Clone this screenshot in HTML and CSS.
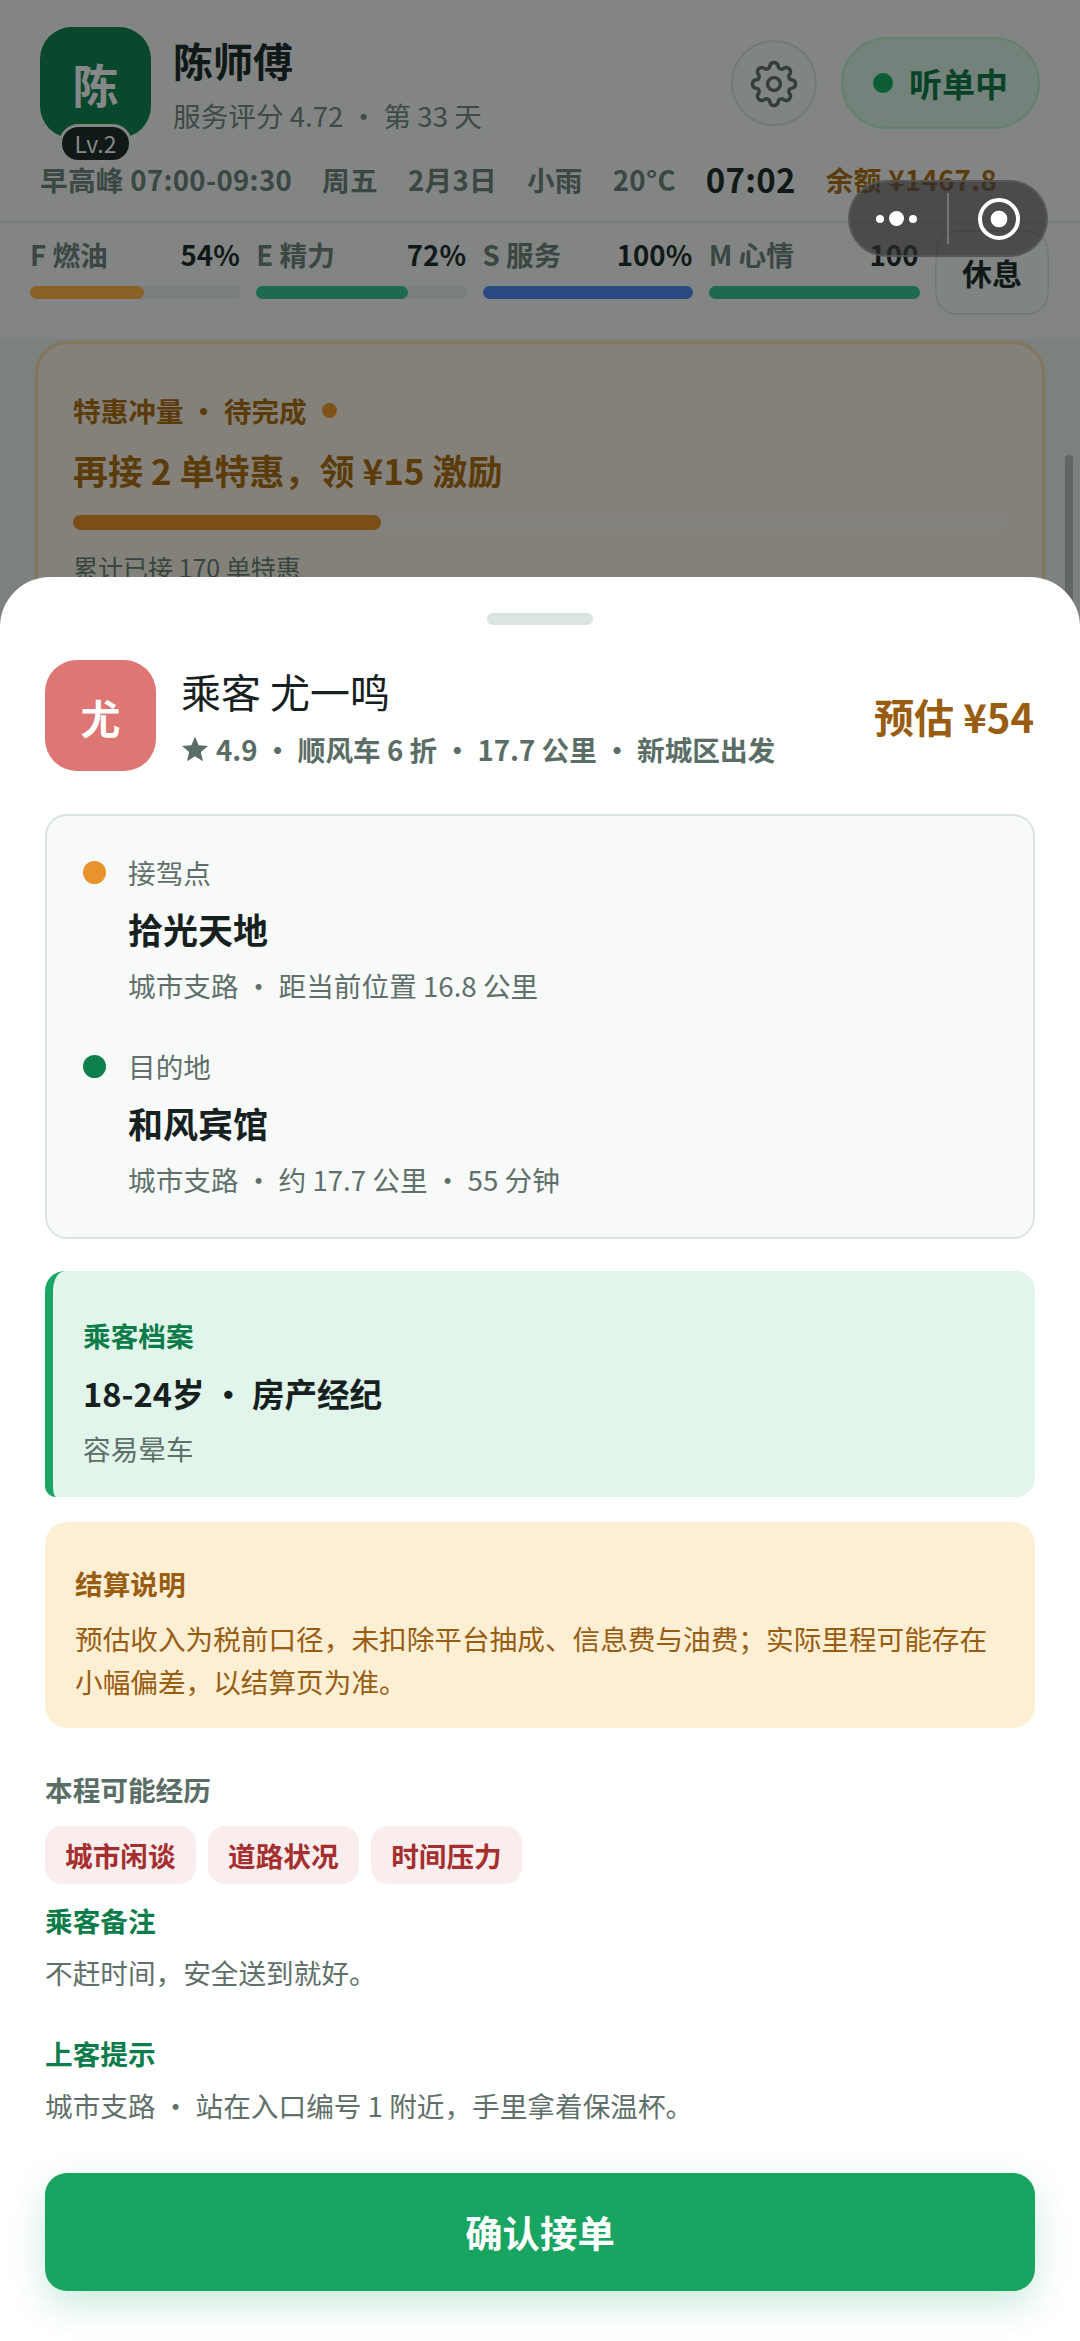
FILE: index.html
```html
<!DOCTYPE html>
<html lang="zh-CN">
<head>
<meta charset="utf-8">
<title>接单</title>
<link rel="stylesheet" href="styles.css">
</head>
<body>
<div class="home">
  <header class="header">
    <div class="driver">
      <div class="driver-avatar">陈<span class="level">Lv.2</span></div>
      <div class="driver-info">
        <div class="driver-name">陈师傅</div>
        <div class="driver-sub">服务评分 4.72 · 第 33 天</div>
      </div>
      <div class="settings">
        <svg width="52" height="52" viewBox="-26.4 -26.4 52.8 52.8" fill="none" stroke="currentColor" stroke-width="3.5" stroke-linejoin="round">
          <path d="M-4.2-18.8A4.4 4.4 0 0 1 4.2-18.8A3.5 3.5 0 0 0 10.32-16.26A4.4 4.4 0 0 1 16.26-10.32A3.5 3.5 0 0 0 18.8-4.2A4.4 4.4 0 0 1 18.8 4.2A3.5 3.5 0 0 0 16.26 10.32A4.4 4.4 0 0 1 10.32 16.26A3.5 3.5 0 0 0 4.2 18.8A4.4 4.4 0 0 1-4.2 18.8A3.5 3.5 0 0 0-10.32 16.26A4.4 4.4 0 0 1-16.26 10.32A3.5 3.5 0 0 0-18.8 4.2A4.4 4.4 0 0 1-18.8-4.2A3.5 3.5 0 0 0-16.26-10.32A4.4 4.4 0 0 1-10.32-16.26A3.5 3.5 0 0 0-4.2-18.8Z"/>
          <circle r="6.5"/>
        </svg>
      </div>
      <div class="status"><i class="status-dot"></i>听单中</div>
    </div>
    <div class="facts">
      <span>早高峰 07:00-09:30</span><span>周五</span><span>2月3日</span><span>小雨</span><span>20°C</span><span class="clock">07:02</span><span class="balance">余额 ¥1467.8</span>
    </div>
  </header>
  <section class="stats">
    <div class="stat"><div class="stat-head"><span>F 燃油</span><b>54%</b></div><div class="bar"><i class="fill amber" style="width:54%"></i></div></div>
    <div class="stat"><div class="stat-head"><span>E 精力</span><b>72%</b></div><div class="bar"><i class="fill teal" style="width:72%"></i></div></div>
    <div class="stat"><div class="stat-head"><span>S 服务</span><b>100%</b></div><div class="bar"><i class="fill blue" style="width:100%"></i></div></div>
    <div class="stat"><div class="stat-head"><span>M 心情</span><b>100</b></div><div class="bar"><i class="fill teal" style="width:100%"></i></div></div>
    <div class="rest">休息</div>
  </section>
  <section class="promo">
    <div class="promo-tag">特惠冲量 · 待完成<i class="promo-dot"></i></div>
    <div class="promo-title">再接 2 单特惠，领 ¥15 激励</div>
    <div class="promo-bar"><i style="width:33%"></i></div>
    <div class="promo-note">累计已接 170 单特惠</div>
  </section>
  <div class="scrollbar"></div>
</div>

<div class="capsule">
  <div class="capsule-more"><i></i><i class="big"></i><i></i></div>
  <div class="capsule-line"></div>
  <div class="capsule-close"><i class="ring"></i></div>
</div>

<main class="sheet">
  <div class="handle"></div>
  <div class="passenger">
    <div class="passenger-avatar">尤</div>
    <div class="passenger-info">
      <div class="passenger-name">乘客 尤一鸣</div>
      <div class="passenger-meta"><svg class="star" viewBox="0 0 26 26"><path fill="currentColor" d="M13 0.5L16.6 9.2L26 9.9L18.8 16L21 25.2L13 20.2L5 25.2L7.2 16L0 9.9L9.4 9.2Z"/></svg><span>4.9 · 顺风车 6 折 · 17.7 公里 · 新城区出发</span></div>
    </div>
    <div class="price">预估 ¥54</div>
  </div>
  <div class="route">
    <div class="stop">
      <i class="stop-dot start"></i>
      <div class="stop-label">接驾点</div>
      <div class="stop-name">拾光天地</div>
      <div class="stop-note">城市支路 · 距当前位置 16.8 公里</div>
    </div>
    <div class="stop">
      <i class="stop-dot end"></i>
      <div class="stop-label">目的地</div>
      <div class="stop-name">和风宾馆</div>
      <div class="stop-note">城市支路 · 约 17.7 公里 · 55 分钟</div>
    </div>
  </div>
  <div class="profile">
    <div class="green-label">乘客档案</div>
    <div class="profile-title">18-24岁 · 房产经纪</div>
    <div class="text">容易晕车</div>
  </div>
  <div class="settle">
    <div class="settle-title">结算说明</div>
    <div class="settle-text">预估收入为税前口径，未扣除平台抽成、信息费与油费；实际里程可能存在小幅偏差，以结算页为准。</div>
  </div>
  <div class="events-label">本程可能经历</div>
  <div class="chips"><span class="chip">城市闲谈</span><span class="chip">道路状况</span><span class="chip">时间压力</span></div>
  <div class="note">
    <div class="green-label">乘客备注</div>
    <div class="text">不赶时间，安全送到就好。</div>
  </div>
  <div class="note">
    <div class="green-label">上客提示</div>
    <div class="text">城市支路 · 站在入口编号 1 附近，手里拿着保温杯。</div>
  </div>
  <div class="confirm">确认接单</div>
</main>
</body>
</html>
```
FILE: styles.css
```css
* { box-sizing: border-box; }
body {
  margin: 0;
  width: 1080px;
  height: 2341px;
  position: relative;
  overflow: hidden;
  background: #7c8180;
  font-family: "Noto Sans CJK SC", sans-serif;
  font-size: 27.65px;
  line-height: 40px;
  color: #16211f;
}
i { font-style: normal; display: block; }

/* dimmed home screen */
.home { height: 634px; overflow: hidden; position: relative; background: #7c8180; color: #101918; }
.header { height: 223px; padding: 27px 40px 0; background: #838584; border-bottom: 2px solid #767a78; }
.driver { display: flex; height: 111px; }
.driver-avatar {
  position: relative;
  width: 111px; height: 111px;
  border-radius: 32px;
  background: #09482d;
  color: #868887;
  font-size: 46px; font-weight: 700; line-height: 113px;
  text-align: center;
}
.level {
  position: absolute;
  left: 19px; top: 97px;
  width: 73px; height: 39px;
  border: 3px solid #838584;
  border-radius: 20px;
  background: #101918;
  color: #868887;
  font-size: 23px; font-weight: 400; line-height: 32px;
}
.driver-info { flex: 1; padding: 5px 0 0 22px; }
.driver-name { font-size: 40px; font-weight: 700; line-height: 56px; }
.driver-sub { margin-top: 7px; color: #3e4a46; }
.settings {
  display: flex; align-items: center; justify-content: center;
  width: 86px; height: 86px;
  margin: 13px 24px 0 0;
  padding-top: 2px;
  border: 2px solid #747978;
  border-radius: 50%;
  background: #808483;
  color: #333e3a;
}
.status {
  display: flex; align-items: center; justify-content: center; gap: 16px;
  width: 199px; height: 92px;
  margin-top: 10px;
  border: 2px solid #64806f;
  border-radius: 46px;
  background: #73827a;
  color: #0a4229;
  font-size: 33px; font-weight: 700;
}
.status-dot { width: 20px; height: 20px; border-radius: 50%; background: #0c5c36; }
.facts { display: flex; gap: 30px; margin-top: 21px; color: #3a4743; font-weight: 700; letter-spacing: .28px; white-space: nowrap; }
.clock { font-size: 33px; color: #101918; }
.balance { color: #5c3c0c; }

.stats {
  display: grid;
  grid-template-columns: repeat(4, 1fr) 114px;
  column-gap: 15.5px;
  height: 116px;
  padding: 7px 31px 0 30px;
  background: #838584;
}
.stat { padding-top: 4px; }
.stat-head { display: flex; justify-content: space-between; padding-right: 1px; color: #3a4743; font-weight: 700; }
.stat-head b { color: #101918; font-weight: 700; }
.bar { height: 13px; margin-top: 12px; border-radius: 7px; background: #7a7f7d; }
.fill { height: 100%; border-radius: 7px; }
.amber { background: #896125; }
.teal { background: #1d6a52; }
.blue { background: #294a80; }
.rest {
  height: 85px;
  border: 2px solid #747978;
  border-radius: 22px;
  background: #808483;
  text-align: center;
  font-size: 30px; font-weight: 700; line-height: 81px;
}

.promo {
  height: 400px;
  margin: 2px 35px 0;
  padding: 46px 35px 0;
  border: 3px solid #84765c;
  border-radius: 32px;
  background: #83817a;
  color: #5c3b0b;
}
.promo-tag { display: flex; align-items: center; gap: 15px; font-weight: 700; }
.promo-dot { width: 15px; height: 15px; border-radius: 50%; background: #7f5219; }
.promo-title { margin-top: 15px; font-size: 35px; font-weight: 700; line-height: 50px; }
.promo-bar { height: 15px; margin-top: 20px; border-radius: 8px; background: #83827f; }
.promo-bar i { height: 100%; border-radius: 8px; background: #7b4e18; }
.promo-note { margin-top: 17px; font-size: 25px; color: #36463f; }
.scrollbar { position: absolute; left: 1065px; top: 455px; width: 8px; height: 200px; border-radius: 4px; background: #616564; }

/* mini-program capsule */
.capsule {
  position: absolute;
  left: 848px; top: 180px;
  width: 200px; height: 77px;
  display: flex; align-items: center;
  border: 2px solid rgba(90, 92, 91, .8);
  border-radius: 39px;
  background: rgba(45, 45, 45, .65);
}
.capsule-more { display: flex; align-items: center; justify-content: center; gap: 5px; width: 97px; padding-right: 4px; }
.capsule-more i { width: 8px; height: 8px; border-radius: 50%; background: #fff; }
.capsule-more .big { width: 15px; height: 15px; }
.capsule-line { width: 2px; height: 51px; background: #747676; }
.capsule-close { display: flex; flex: 1; justify-content: center; padding-left: 2px; }
.ring { width: 42px; height: 42px; border: 4px solid #fff; border-radius: 50%; background: radial-gradient(circle, #fff 8px, transparent 8.7px); }

/* order sheet */
.sheet {
  position: relative;
  height: 1764px;
  margin-top: -57px;
  padding: 36px 45px 0;
  border-radius: 50px 50px 0 0;
  background: #fff;
}
.handle { width: 106px; height: 12px; margin: 0 auto; border-radius: 6px; background: #dbe4e0; }
.passenger { display: flex; height: 111px; margin-top: 35px; }
.passenger-avatar {
  width: 111px; height: 111px;
  border-radius: 32px;
  background: #de7673;
  color: #fff;
  text-align: center;
  font-size: 40px; font-weight: 700; line-height: 115px;
}
.passenger-info { flex: 1; padding: 3px 0 0 25px; }
.passenger-name { font-size: 40px; line-height: 56px; }
.passenger-meta { display: flex; align-items: center; gap: 8px; margin-top: 10px; color: #5a6e66; font-weight: 700; white-space: nowrap; }
.star { width: 26px; height: 26px; margin-left: 1px; }
.price { margin-right: 1px; color: #995d12; font-size: 40px; font-weight: 700; line-height: 113px; }

.route {
  height: 425px;
  margin-top: 43px;
  padding: 36px 36px 0 81px;
  border: 2px solid #dbe4e1;
  border-radius: 22px;
  background: #f7faf9;
}
.stop { position: relative; height: 193.5px; }
.stop-dot { position: absolute; left: -45px; top: 9px; width: 23px; height: 23px; border-radius: 50%; }
.start { background: #e8932c; }
.end { background: #0c7f4b; }
.stop-label, .stop-note, .text { color: #5f706a; }
.stop-name { margin-top: 12px; font-size: 35px; font-weight: 700; line-height: 50px; }
.stop-note { margin-top: 11px; }

.profile {
  height: 226px;
  margin-top: 32px;
  padding: 44px 30px 0 30px;
  border-left: 8px solid #1aa564;
  border-radius: 20px 20px 20px 11px;
  background: #e1f5ea;
}
.green-label { color: #0c7d4a; font-weight: 700; }
.profile-title { margin: 13px 0 10px; font-size: 32.6px; font-weight: 700; line-height: 50px; }

.settle {
  height: 206px;
  margin-top: 25px;
  padding: 41px 31px 0 30px;
  border-radius: 22px;
  background: #fdefd4;
  color: #995d12;
}
.settle-title { font-weight: 700; }
.settle-text { margin-top: 14px; line-height: 43px; }

.events-label { margin-top: 41px; color: #5a6e66; font-weight: 700; }
.chips { display: flex; gap: 12.5px; margin-top: 17px; }
.chip { height: 58px; padding: 0 20px; border-radius: 17px; background: #f9eded; color: #a52f2f; font-weight: 700; line-height: 58px; }
.note { height: 133px; padding-top: 16px; }
.note .text { margin-top: 12px; }
.confirm {
  height: 118px;
  margin-top: 23px;
  border-radius: 22px;
  background: #18a461;
  box-shadow: 0 14px 36px rgba(24, 164, 97, .22);
  color: #fff;
  text-align: center;
  font-size: 37.4px; font-weight: 700; line-height: 118px;
}
```
